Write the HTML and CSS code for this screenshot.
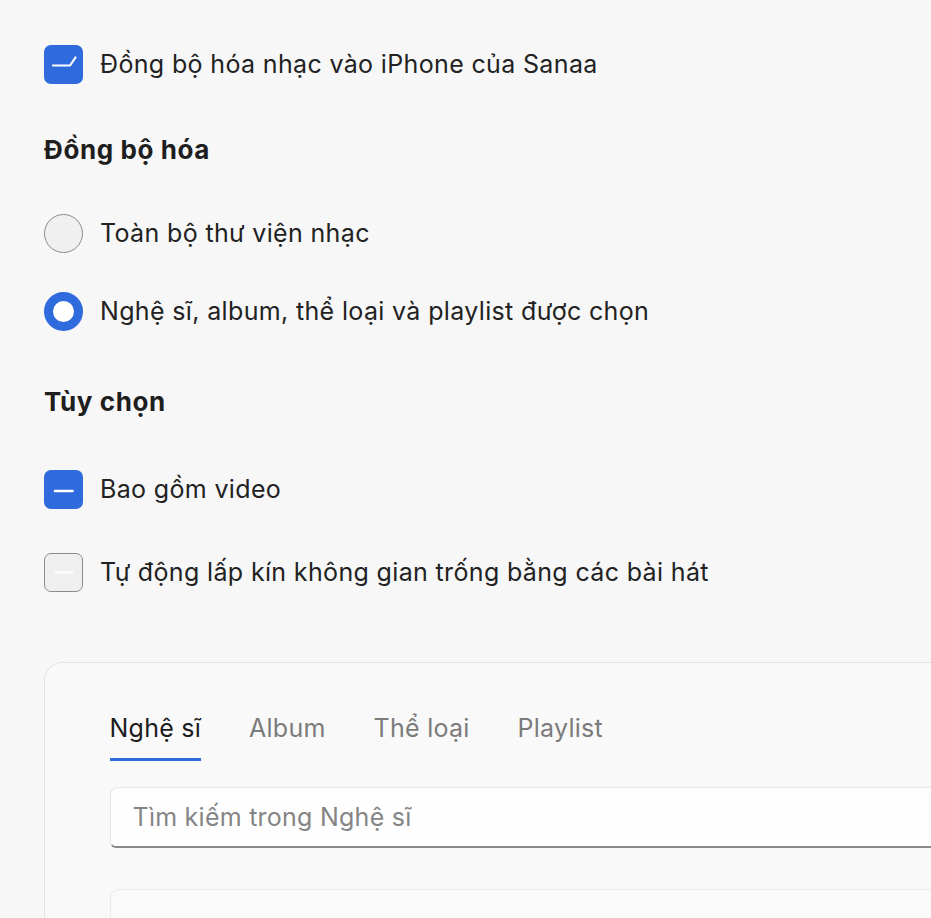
FILE: index.html
```html
<!DOCTYPE html>
<html lang="vi">
<head>
<meta charset="utf-8">
<title>Đồng bộ hóa nhạc</title>
<link rel="stylesheet" href="styles.css">
</head>
<body>
<div class="page">
  <label class="row row-first">
    <span class="box box-on">
      <svg viewBox="0 0 39 39" width="39" height="39"><path d="M9 20.5 H26 L31.5 12.5" fill="none" stroke="#fff" stroke-width="2.2" stroke-linecap="round" stroke-linejoin="round"/></svg>
    </span>
    <span class="label">Đồng bộ hóa nhạc vào iPhone của Sanaa</span>
  </label>

  <h2 class="heading heading-sync">Đồng bộ hóa</h2>

  <label class="row row-radio1">
    <span class="radio"></span>
    <span class="label">Toàn bộ thư viện nhạc</span>
  </label>
  <label class="row row-radio2">
    <span class="radio radio-on"></span>
    <span class="label">Nghệ sĩ, album, thể loại và playlist được chọn</span>
  </label>

  <h2 class="heading heading-opt">Tùy chọn</h2>

  <label class="row row-video">
    <span class="box box-on">
      <svg viewBox="0 0 39 39" width="39" height="39"><path d="M11 21 H28.5" fill="none" stroke="#fff" stroke-width="2.6" stroke-linecap="round"/></svg>
    </span>
    <span class="label">Bao gồm video</span>
  </label>
  <label class="row row-fill">
    <span class="box box-off">
      <svg viewBox="0 0 36 36" width="36" height="36"><path d="M10 18.5 H26" fill="none" stroke="#fdfdfd" stroke-width="2.6" stroke-linecap="round"/></svg>
    </span>
    <span class="label">Tự động lấp kín không gian trống bằng các bài hát</span>
  </label>

  <section class="panel">
    <nav class="tabs">
      <span class="tab tab-active">Nghệ sĩ</span>
      <span class="tab">Album</span>
      <span class="tab">Thể loại</span>
      <span class="tab">Playlist</span>
    </nav>
    <div class="search">Tìm kiếm trong Nghệ sĩ</div>
    <div class="list"></div>
  </section>
</div>
</body>
</html>
```

FILE: styles.css
```css
html, body {
  margin: 0;
  padding: 0;
}
body {
  background: #f7f7f7;
  font-family: "Inter", "Liberation Sans", sans-serif;
  color: #222222;
  overflow: hidden;
  width: 931px;
  height: 918px;
}
.page {
  padding: 44px 0 0 44px;
  display: flex;
  flex-direction: column;
}
.row {
  display: flex;
  align-items: center;
  height: 40px;
  gap: 17px;
}
.label {
  font-size: 25px;
  letter-spacing: 0.35px;
  color: #222222;
}
.box {
  width: 39px;
  height: 39px;
  box-sizing: border-box;
  border-radius: 7px;
  flex: none;
  display: flex;
  align-items: center;
  justify-content: center;
}
.box-on {
  background: #2f6bdc;
}
.box-off {
  background: #efefef;
  border: 1.5px solid #8c8c8c;
}
.radio {
  width: 39px;
  height: 39px;
  box-sizing: border-box;
  border-radius: 50%;
  flex: none;
  background: #f0f0f0;
  border: 1.5px solid #8c8c8c;
}
.radio-on {
  background: #ffffff;
  border: 9px solid #2f6bdc;
}
.heading {
  margin: 0;
  font-size: 26px;
  font-weight: 700;
  letter-spacing: 0.6px;
  height: 30px;
  line-height: 30px;
  color: #1e1e1e;
}
.heading-sync { margin-top: 51px; }
.row-radio1 { margin-top: 48px; }
.row-radio2 { margin-top: 38px; }
.heading-opt { margin-top: 56px; }
.row-video { margin-top: 52px; }
.row-fill { margin-top: 43px; }

.panel {
  margin-top: 70px;
  width: 960px;
  height: 400px;
  box-sizing: border-box;
  background: #f9f9f9;
  border: 1.5px solid #e4e4e4;
  border-radius: 18px 0 0 0;
  padding: 45px 0 0 64.5px;
}
.tabs {
  display: flex;
  gap: 48px;
}
.tab {
  font-size: 25px;
  letter-spacing: 0.25px;
  color: #7b7b7b;
  padding-bottom: 10px;
  border-bottom: 3px solid transparent;
  line-height: 40px;
}
.tab-active {
  color: #1c1c1c;
  border-bottom-color: #2f6bdc;
}
.search {
  margin-top: 26px;
  height: 61px;
  box-sizing: border-box;
  background: #fefefe;
  border: 1px solid #e6e6e6;
  border-bottom: 2.5px solid #8a8a8a;
  border-radius: 8px 0 0 6px;
  padding-left: 22px;
  display: flex;
  align-items: center;
  font-size: 25px;
  letter-spacing: 0.25px;
  color: #858585;
}
.list {
  margin-top: 41px;
  height: 200px;
  box-sizing: border-box;
  background: #fafafa;
  border: 1.5px solid #ebebeb;
  border-radius: 9px 0 0 0;
}
```
